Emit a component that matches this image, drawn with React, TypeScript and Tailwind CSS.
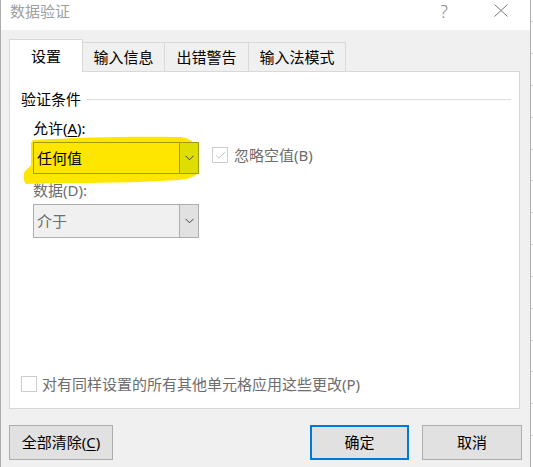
import { Check } from "lucide-react"

const font = { fontFamily: '"Noto Sans", "Noto Sans CJK SC", sans-serif' }

function Chevron() {
  return (
    <svg width="9" height="6" viewBox="0 0 9 6" className="text-[#404040]">
      <path d="M0.5 0.8 L4.5 4.8 L8.5 0.8" fill="none" stroke="currentColor" strokeWidth="1" />
    </svg>
  )
}

function Tab({ label, active, w }: { label: string; active?: boolean; w: string }) {
  if (active) {
    return (
      <div
        className={`relative z-10 -mb-px flex h-[33px] ${w} items-center justify-center border border-b-0 border-[#d9d9d9] bg-white pt-[1px] text-[15px] text-black`}
      >
        {label}
      </div>
    )
  }
  return (
    <div
      className={`flex h-[29px] ${w} items-center justify-center border-t border-r border-[#d9d9d9] bg-[#f0f0f0] pt-[1px] text-[15px] text-black`}
    >
      {label}
    </div>
  )
}

function Button({ label, w, primary }: { label: React.ReactNode; w: string; primary?: boolean }) {
  return (
    <div
      className={`flex h-[35px] ${w} items-center justify-center bg-[#e1e1e1] text-[15px] text-black ${
        primary ? "border-2 border-[#0078d7]" : "border border-[#adadad]"
      }`}
    >
      {label}
    </div>
  )
}

export default function App() {
  return (
    <div className="flex h-[467px] w-[533px] overflow-hidden bg-white" style={font}>
      <div className="flex h-full w-[531px] flex-col border-l border-r border-[#acacac] bg-[#f0f0f0]">
        {/* title bar */}
        <div className="flex h-[30px] items-start bg-white">
          <span className="pl-[9px] text-[15px] leading-[22px] text-[#a0a0a0]">数据验证</span>
          <span className="ml-auto mr-[46px] text-[18px] font-light leading-[22px] text-[#8a8a8a]">?</span>
          <svg width="14" height="13" viewBox="0 0 14 13" className="mr-[22px] mt-[4px]">
            <path d="M0.5 0.5 L13.5 12.5 M13.5 0.5 L0.5 12.5" stroke="#7a7a7a" strokeWidth="1" fill="none" />
          </svg>
        </div>

        {/* tabs */}
        <div className="mt-[9px] flex items-end pl-[8px]">
          <Tab label="设置" active w="w-[74px]" />
          <Tab label="输入信息" w="w-[82px]" />
          <Tab label="出错警告" w="w-[84px]" />
          <Tab label="输入法模式" w="w-[97px]" />
        </div>

        {/* panel */}
        <div className="ml-[8px] flex h-[338px] w-[511px] flex-col border border-[#d9d9d9] bg-white">
          <div className="flex items-center pl-[11px] pr-[8px] pt-[17px]">
            <span className="text-[15px] leading-[20px] text-black">验证条件</span>
            <div className="ml-[6px] h-px flex-1 bg-[#dcdcdc]" />
          </div>

          <div className="flex flex-col pl-[23px]">
            <span className="mt-[9px] text-[15px] leading-[20px] text-black">
              允许(<span className="underline underline-offset-2">A</span>):
            </span>

            <div className="mt-[4px] flex items-start">
              <div className="relative">
                <svg
                  width="180"
                  height="52"
                  viewBox="0 0 180 52"
                  className="absolute left-[-13px] top-[-8px]"
                >
                  <path
                    d="M13 6 C60 3 120 2 160 3 C170 4 175 8 178 16 L178 39 C172 45 165 46 140 47 C100 49 60 49 30 49 L6 50 C3 46 3 40 5 37 C8 34 11 33 11 30 L11 9 Z"
                    fill="#ffe600"
                  />
                </svg>
                <div className="relative flex h-[32px] w-[166px] border border-[#a39c00]">
                  <div className="flex flex-1 items-center bg-[#ffe600] pl-[3px] text-[15px] text-black">任何值</div>
                  <div className="flex w-[19px] items-center justify-center border-l border-[#a39c00] bg-[#dede00]">
                    <Chevron />
                  </div>
                </div>
              </div>

              <div className="ml-[13px] mt-[3px] flex items-center">
                <div className="flex h-[16px] w-[16px] items-center justify-center border border-[#cccccc] bg-white">
                  <Check size={13} strokeWidth={1.5} className="text-[#b8b8b8]" />
                </div>
                <span className="ml-[6px] text-[15px] leading-[20px] text-[#6d6d6d]">忽略空值(B)</span>
              </div>
            </div>

            <span className="mt-[6px] text-[15px] leading-[20px] text-[#6d6d6d]">数据(D):</span>

            <div className="mt-[4px] flex h-[34px] w-[166px] border border-[#adadad] bg-[#f0f0f0]">
              <div className="flex flex-1 items-center pl-[3px] text-[15px] text-[#6d6d6d]">介于</div>
              <div className="flex w-[19px] items-center justify-center border-l border-[#adadad] bg-[#e1e1e1]">
                <Chevron />
              </div>
            </div>
          </div>

          <div className="mt-auto flex items-center pb-[14px] pl-[11px]">
            <div className="h-[16px] w-[16px] border border-[#cccccc] bg-white" />
            <span className="ml-[5px] text-[15px] leading-[20px] text-[#6d6d6d]">
              对有同样设置的所有其他单元格应用这些更改(P)
            </span>
          </div>
        </div>

        {/* buttons */}
        <div className="mt-[16px] flex px-[8px]">
          <Button
            w="w-[104px]"
            label={
              <span>
                全部清除(<span className="underline underline-offset-2">C</span>)
              </span>
            }
          />
          <div className="ml-auto flex gap-[13px]">
            <Button label="确定" w="w-[99px]" primary />
            <Button label="取消" w="w-[100px]" />
          </div>
        </div>
      </div>

      {/* sheet behind */}
      <div className="flex flex-1 flex-col bg-white">
        <div className="h-[22px]" />
        {[...Array(14)].map((_, i) => (
          <div key={i} className="h-[33px] border-t border-[#d4d4d4]" />
        ))}
      </div>
    </div>
  )
}
